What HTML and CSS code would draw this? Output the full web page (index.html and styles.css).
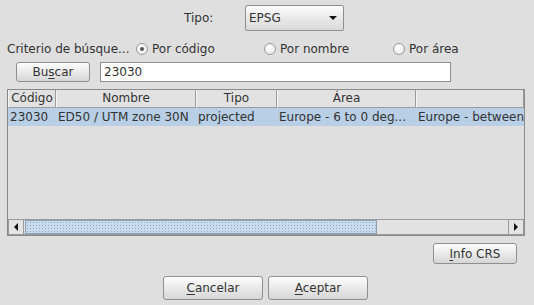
FILE: index.html
```html
<!DOCTYPE html>
<html lang="es">
<head>
  <meta charset="UTF-8">
  <title>Selección de CRS</title>
  <link rel="stylesheet" href="styles.css">
</head>
<body>
  <div class="dialog">

    <div class="row-tipo">
      <span class="tipo-label">Tipo:</span>
      <div class="combo">
        <span>EPSG</span>
        <span class="combo-arrow"></span>
      </div>
    </div>

    <div class="row-criterio">
      <span class="criterio">Criterio de búsque...</span>
      <label class="radio r1"><span class="dot checked"></span>Por código</label>
      <label class="radio r2"><span class="dot"></span>Por nombre</label>
      <label class="radio r3"><span class="dot"></span>Por área</label>
    </div>

    <div class="row-buscar">
      <button class="btn btn-buscar">Bu<u>s</u>car</button>
      <div class="field">23030</div>
    </div>

    <div class="table">
      <div class="viewport">
        <div class="grid header">
          <div class="th">Código</div>
          <div class="th">Nombre</div>
          <div class="th">Tipo</div>
          <div class="th">Área</div>
          <div class="th"></div>
        </div>
        <div class="grid selected">
          <div class="td">23030</div>
          <div class="td">ED50 / UTM zone 30N</div>
          <div class="td">projected</div>
          <div class="td">Europe - 6 to 0 deg...</div>
          <div class="td">Europe - between</div>
        </div>
      </div>
      <div class="hscroll">
        <div class="arrow left"></div>
        <div class="track"><div class="thumb"></div></div>
        <div class="arrow right"></div>
      </div>
    </div>

    <div class="row-info">
      <button class="btn btn-info"><u>I</u>nfo CRS</button>
    </div>

    <div class="row-actions">
      <button class="btn btn-action"><u>C</u>ancelar</button>
      <button class="btn btn-action"><u>A</u>ceptar</button>
    </div>

  </div>
</body>
</html>
```

FILE: styles.css
```css
body {
  margin: 0;
  background: #dfdfdf;
  font-family: "DejaVu Sans", sans-serif;
  font-size: 12px;
  color: #333;
}

.dialog {
  width: 534px;
  height: 305px;
  overflow: hidden;
}

/* Tipo row */
.row-tipo {
  display: flex;
  align-items: center;
  height: 26px;
  margin-top: 5px;
}

.tipo-label {
  margin-left: 184px;
  width: 61px;
}

.combo {
  box-sizing: border-box;
  width: 99px;
  height: 26px;
  display: flex;
  align-items: center;
  justify-content: space-between;
  padding: 0 6px 0 3px;
  border: 1px solid #8e8f8f;
  border-radius: 2px;
  background: linear-gradient(#fcfcfc, #e6e6e6 60%, #d9d9d9);
}

.combo-arrow {
  width: 0;
  height: 0;
  border-left: 4px solid transparent;
  border-right: 4px solid transparent;
  border-top: 4px solid #111;
}

/* Criterio row */
.row-criterio {
  display: flex;
  align-items: center;
  height: 18px;
  margin-top: 9px;
}

.criterio {
  margin-left: 7px;
  width: 129px;
  white-space: nowrap;
}

.radio {
  display: flex;
  align-items: center;
  gap: 4px;
  white-space: nowrap;
}

.r1 { width: 128px; }
.r2 { width: 129px; }

.dot {
  box-sizing: border-box;
  width: 12px;
  height: 12px;
  border-radius: 50%;
  border: 1px solid #9a9a9a;
  background: radial-gradient(circle at 40% 35%, #ffffff, #e4e4e4);
  display: flex;
  align-items: center;
  justify-content: center;
}

.dot.checked::after {
  content: "";
  width: 4px;
  height: 4px;
  border-radius: 50%;
  background: #555;
}

/* Buscar row */
.row-buscar {
  display: flex;
  align-items: center;
  margin-top: 4px;
  height: 20px;
}

.btn {
  box-sizing: border-box;
  font-family: "DejaVu Sans", sans-serif;
  font-size: 12px;
  color: #333;
  border: 1px solid #8e8f8f;
  border-radius: 3px;
  background: linear-gradient(#fdfdfd, #e8e8e8 55%, #d6d6d6);
  padding: 0;
}

.btn u {
  text-underline-offset: 2px;
}

.btn-buscar {
  margin-left: 16px;
  width: 74px;
  height: 20px;
}

.field {
  box-sizing: border-box;
  margin-left: 10px;
  width: 351px;
  height: 20px;
  background: #fff;
  border: 1px solid #8e8f8f;
  padding: 1px 3px;
  line-height: 16px;
}

/* Table */
.table {
  box-sizing: border-box;
  margin: 7px 0 0 7px;
  width: 518px;
  height: 147px;
  border: 1px solid #8a8a8a;
  display: flex;
  flex-direction: column;
}

.viewport {
  flex: 1;
  overflow: hidden;
}

.grid {
  display: grid;
  grid-template-columns: 48px 140px 81px 139px 108px;
  width: 516px;
}

.th {
  box-sizing: border-box;
  height: 18px;
  line-height: 16px;
  text-align: center;
  border-right: 1px solid #9c9c9c;
  border-bottom: 1px solid #9c9c9c;
  border-left: 1px solid #f4f4f4;
  background: #e2e2e2;
}

.selected {
  background: #b8cfe5;
}

.td {
  height: 18px;
  line-height: 18px;
  padding-left: 2px;
  white-space: nowrap;
  overflow: hidden;
}

/* Horizontal scrollbar */
.hscroll {
  display: flex;
  height: 16px;
  border-top: 1px solid #9a9a9a;
  box-sizing: border-box;
}

.arrow {
  box-sizing: border-box;
  width: 16px;
  height: 15px;
  border: 1px solid #9a9a9a;
  border-top: none;
  background: #e4e4e4;
  display: flex;
  align-items: center;
  justify-content: center;
}

.arrow::after {
  content: "";
  width: 0;
  height: 0;
  border-top: 4px solid transparent;
  border-bottom: 4px solid transparent;
}

.arrow.left::after {
  border-right: 4px solid #111;
}

.arrow.right::after {
  border-left: 4px solid #111;
}

.track {
  flex: 1;
  background: #e2e2e2;
  border-bottom: 1px solid #9a9a9a;
  padding-left: 1px;
  display: flex;
}

.thumb {
  box-sizing: border-box;
  width: 352px;
  height: 14px;
  border: 1px solid #8aa0b6;
  background-color: #c9dcef;
  background-image: radial-gradient(circle, #8fa6bf 0.6px, transparent 0.9px);
  background-size: 3px 3px;
}

/* Info CRS */
.row-info {
  display: flex;
  margin-top: 7px;
}

.btn-info {
  margin-left: 433px;
  width: 84px;
  height: 21px;
}

/* Bottom actions */
.row-actions {
  display: flex;
  gap: 5px;
  margin-top: 12px;
  padding-left: 163px;
}

.btn-action {
  width: 100px;
  height: 24px;
}
```
